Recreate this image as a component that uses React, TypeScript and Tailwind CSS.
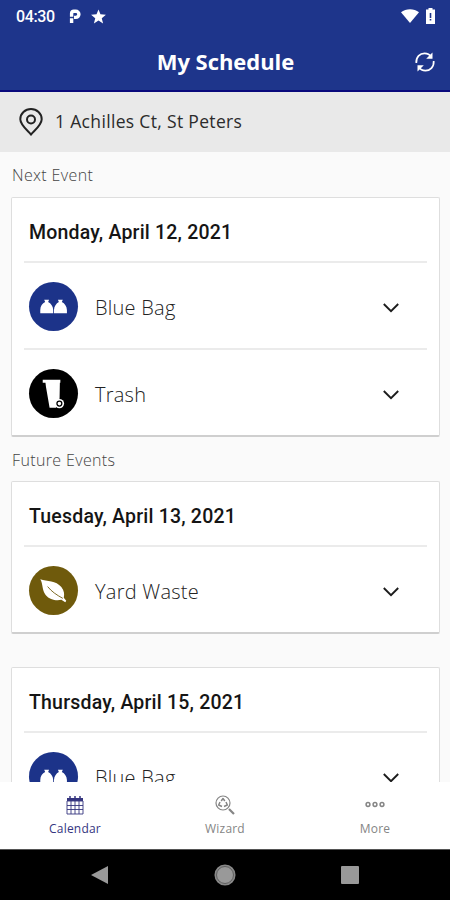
import type { ReactNode } from "react";

type Kind = "blue" | "trash" | "yard";

const LABELS: Record<Kind, string> = {
  blue: "Blue Bag",
  trash: "Trash",
  yard: "Yard Waste",
};

const COLORS: Record<Kind, string> = {
  blue: "bg-[#1c3389]",
  trash: "bg-black",
  yard: "bg-[#6f5a0c]",
};

function KindIcon({ kind }: { kind: Kind }) {
  return (
    <svg viewBox="0 0 50 50" className="size-[49px]" fill="#fff">
      {kind === "blue" && (
        <>
          <path d="M11.500 32v-3.500c0-4 2.200-6.500 5-8l-1-2.500h5l-1 2.500c3 1.500 5 4.500 5.200 8V32z" />
          <path d="M25.500 32v-3.500c.2-3.500 2.200-6.500 5-8L29.500 18h5l-1 2.500c3 1.500 5 4.500 5.200 8V32z" />
        </>
      )}
      {kind === "trash" && (
        <>
          <path d="M14 11h18v3h-.5l-.3 16-3.700 9.500H21L17.300 18l-.5-4H14z" />
          <circle cx="31" cy="35.300" r="4.800" />
          <circle cx="31" cy="35.300" r="2.500" fill="none" stroke="#000" strokeWidth="1.300" />
        </>
      )}
      {kind === "yard" && (
        <>
          <path d="M11.500 13.500c7 2.500 16 1 21.500 8 3 3.800 3.300 7.500 2.500 10.800L38 35.500l-1 1.500-4-2.500c-5.500 1-12 0-16-5-4-5.500-2.500-11-5.500-16z" />
          <path d="M19 21c4 5 9 8.500 15.500 12" fill="none" stroke="#6f5a0c" strokeWidth="0.900" />
        </>
      )}
    </svg>
  );
}

function EventRow({ kind }: { kind: Kind }) {
  return (
    <div className="flex h-[85px] items-center pt-[2px] pl-[5px] pr-[28px]">
      <div className={`size-[49px] rounded-full ${COLORS[kind]}`}>
        <KindIcon kind={kind} />
      </div>
      <span className="ml-[17px] pt-[2px] text-[20px] font-light tracking-[0.25px] text-[#222]">{LABELS[kind]}</span>
      <svg viewBox="0 0 16 10" className="mt-[2px] ml-auto h-[10px] w-4" fill="none" stroke="#1c1c1c" strokeWidth="1.900">
        <path d="M.8 1l7.200 7.200L15.200 1" />
      </svg>
    </div>
  );
}

function EventCard({ date, kinds }: { date: string; kinds: Kind[] }) {
  return (
    <div className="mr-[10px] ml-[11px] rounded-[2px] border border-b-2 border-[#dedede] border-b-[#cfcfcf] bg-white px-[12px]">
      <h2 className="flex h-[63px] items-center pt-[7px] pl-[5px] font-[Roboto] text-[19.500px] font-medium tracking-[0.2px] text-[#151515]">
        {date}
      </h2>
      {kinds.map((kind) => (
        <div key={kind} className="border-t-2 border-[#ebebeb]">
          <EventRow kind={kind} />
        </div>
      ))}
    </div>
  );
}

function SectionLabel({ children }: { children: ReactNode }) {
  return (
    <h3 className="flex items-center pt-px pl-[12px] text-[16px] font-light tracking-[0.36px] text-[#444]">
      {children}
    </h3>
  );
}

function NavItem({ label, className, children }: { label: string; className: string; children: ReactNode }) {
  return (
    <div className={`flex w-[150px] flex-col items-center pt-[13px] ${className}`}>
      {children}
      <span className="mt-[5px] text-[12px] leading-[18px] tracking-[0.2px]">{label}</span>
    </div>
  );
}

export default function App() {
  return (
    <div className="flex h-[900px] w-[450px] flex-col overflow-hidden bg-[#fafafa] font-['Open_Sans',sans-serif]">
      <div className="flex h-8 shrink-0 items-center bg-[#1e358b] pr-[15px] pl-4 text-white">
        <span className="w-[39px] pt-px font-[Roboto] text-[16px] font-medium tracking-[-0.4px]">04:30</span>
        <svg viewBox="0 0 12 14" className="ml-[14px] h-[14px] w-3" fill="none" stroke="#fff" strokeWidth="3.400">
          <path d="M2.600 14V9.200M2.600 7.800V4.500c0-1.500.8-2.300 2.200-2.300h2a3 3 0 0 1 0 6.200H5" />
        </svg>
        <svg viewBox="0 0 24 24" className="ml-[9px] size-[17px]" fill="#fff">
          <path d="M12 17.800l6.500 4.200-1.900-7.400L22.500 9.500l-7.700-.6L12 2 9.200 8.900l-7.700.6 5.900 5.100L5.500 22z" />
        </svg>
        <svg viewBox="0 0 18 14" className="ml-auto h-[14px] w-[18px]" fill="#fff">
          <path d="M0 3.200C5-.8 13-.8 18 3.200L9 14z" />
        </svg>
        <svg viewBox="0 0 9 16" className="ml-[7px] h-4 w-[9px]">
          <path d="M2.500 0h4v1.500H9V16H0V1.500h2.500z" fill="#fff" />
          <path d="M4.500 5v5M4.500 11v1.500" stroke="#1e358b" strokeWidth="1.600" />
        </svg>
      </div>

      <header className="grid h-[60px] shrink-0 grid-cols-[1fr_auto_1fr] items-center border-b-2 border-[#0a0a7c] bg-[#1e358b] pt-px text-white">
        <h1 className="col-start-2 pl-px text-[22px] font-bold tracking-[-0.05px]">My Schedule</h1>
        <svg viewBox="0 0 20 20" className="mr-[15px] size-5 justify-self-end" fill="none" stroke="#fff" strokeWidth="1.700">
          <path d="M1.300 11C.8 5 5 1.300 9.500 1.300c3 0 5.300 1.300 6.800 3.700M18.700 9c.5 6-3.700 9.700-8.200 9.700-3 0-5.300-1.300-6.800-3.700" />
          <path d="M17.500.5v6.300h-6.300zM2.500 19.500v-6.300h6.300z" fill="#fff" stroke="none" />
        </svg>
      </header>

      <div className="flex h-[60px] shrink-0 items-center bg-[#e9e9e9] pl-[19px] text-[#2b2b2b]">
        <svg viewBox="0 0 24 28" className="h-7 w-6" fill="none" stroke="#222" strokeWidth="2">
          <path d="M12 26.500C8 22 1.300 17 1.300 11.300a10.700 10.200 0 0 1 21.400 0C22.700 17 16 22 12 26.500z" />
          <circle cx="12" cy="11.500" r="4" />
        </svg>
        <span className="ml-[12px] pb-[2px] text-[17.500px] tracking-[0.33px]">1 Achilles Ct, St Peters</span>
      </div>

      <main className="min-h-0 flex-1 overflow-hidden">
        <div className="grid h-[45px]">
          <SectionLabel>Next Event</SectionLabel>
        </div>
        <EventCard date="Monday, April 12, 2021" kinds={["blue", "trash"]} />
        <div className="grid h-[44px]">
          <SectionLabel>Future Events</SectionLabel>
        </div>
        <EventCard date="Tuesday, April 13, 2021" kinds={["yard"]} />
        <div className="h-[33px]" />
        <EventCard date="Thursday, April 15, 2021" kinds={["blue"]} />
      </main>

      <nav className="flex h-[67px] shrink-0 bg-white">
        <NavItem label="Calendar" className="text-[#35357f]">
          <svg viewBox="0 0 18 20" className="h-5 w-[18px]" fill="none" stroke="currentColor">
            <path d="M1 6h16v13H1zM5 6v13M9 6v13M13 6v13M1 10.500h16M1 14.500h16" strokeWidth="0.900" />
            <path d="M1 4.500h16" strokeWidth="3" />
            <path d="M4 1v3M9 1v3M14 1v3" strokeWidth="1.500" />
          </svg>
        </NavItem>
        <NavItem label="Wizard" className="text-[#858585]">
          <svg viewBox="0 0 20 20" className="size-5" fill="none" stroke="currentColor">
            <circle cx="8" cy="8" r="7" strokeWidth="1.200" />
            <path
              d="M6.200 6l1.800-2.500L9.800 6M11 7l1.300 3-3.300 1.500M7 11.500L3.700 10 5 7"
              strokeWidth="1.500"
              strokeLinejoin="round"
            />
            <path d="M14 14l5 5" strokeWidth="2.200" />
          </svg>
        </NavItem>
        <NavItem label="More" className="text-[#858585]">
          <svg viewBox="0 0 20 20" className="size-5" fill="none" stroke="currentColor" strokeWidth="1.500">
            <circle cx="3" cy="9.500" r="1.900" />
            <circle cx="10" cy="9.500" r="1.900" />
            <circle cx="17" cy="9.500" r="1.900" />
          </svg>
        </NavItem>
      </nav>

      <div className="flex h-[51px] shrink-0 items-center justify-between border-t border-[#555] bg-black pr-[91px] pb-px pl-[91px]">
        <svg viewBox="0 0 18 18" className="size-[18px]" fill="#999">
          <path d="M17 0v18L0 9z" />
        </svg>
        <svg viewBox="0 0 22 22" className="size-[22px]">
          <circle cx="11" cy="11" r="9.800" fill="#999" stroke="#888" strokeWidth="1.500" />
          <circle cx="11" cy="11" r="8.500" fill="none" stroke="#444" strokeWidth="0.700" />
        </svg>
        <div className="size-[18px] rounded-[1px] bg-[#999]" />
      </div>
    </div>
  );
}
